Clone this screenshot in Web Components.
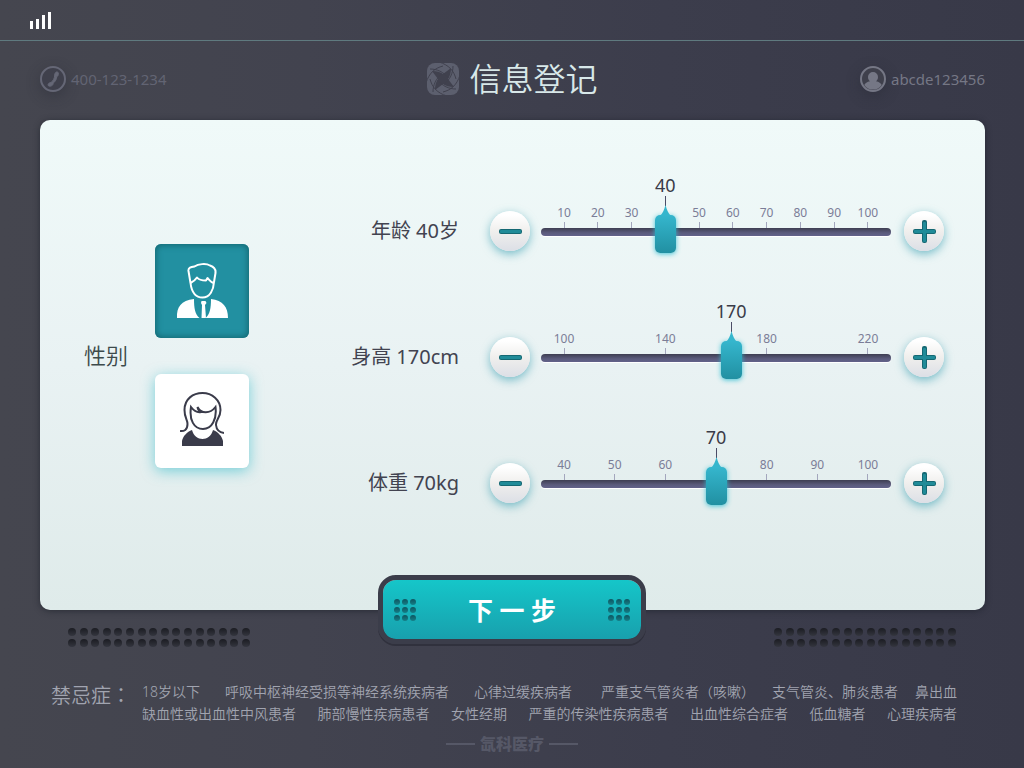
<!DOCTYPE html>
<html lang="zh-CN">
<head>
<meta charset="utf-8">
<meta name="viewport" content="width=device-width, initial-scale=1">
<title>信息登记</title>
<style>
  html { height: 100%; }
  body {
    margin: 0;
    min-height: 100%;
    font-family: "Noto Sans", "Noto Sans CJK SC", sans-serif;
    background: linear-gradient(90deg, #45464f 0%, #42434f 30%, #3c3d4c 65%, #383948 100%);
  }
</style>
</head>
<body>
<register-page></register-page>

<script>
const define = (name, html, setup) => {
  const tpl = document.createElement('template');
  tpl.innerHTML = html;
  customElements.define(name, class extends HTMLElement {
    constructor() {
      super();
      this.attachShadow({ mode: 'open' }).append(tpl.content.cloneNode(true));
    }
    connectedCallback() {
      if (setup && !this.ready) { this.ready = true; setup(this, this.shadowRoot); }
    }
  });
};

define('status-bar', `
  <style>
    :host { display: flex; align-items: center; height: 40px; padding: 0 30px; border-bottom: 1px solid #5f7a7f; }
    svg { display: block; }
  </style>
  <svg width="21" height="17" fill="#fff" shape-rendering="crispEdges" role="img" aria-label="signal">
    <path d="M0 9h3v8H0zM6 7h3v10H6zM12 3h3v14h-3zM18 0h3v17h-3z"/>
  </svg>
`);

define('contact-badge', `
  <style>
    :host { display: flex; align-items: center; gap: 5px; font-size: 15px; line-height: 26px; color: #626473; }
    .ring { display: flex; border-radius: 50%; box-shadow: 0 4px 14px rgba(40, 42, 54, .45); }
    ::slotted(svg) { display: block; }
  </style>
  <span class="ring"><slot name="icon"></slot></span><slot></slot>
`);

define('page-header', `
  <style>
    :host { display: grid; grid-template-columns: 1fr auto 1fr; align-items: center; height: 76px; padding: 0 39px 3px 40px; }
    h1 { display: flex; align-items: center; gap: 10px; margin: 0; font-size: 32px; line-height: 40px; font-weight: 350; color: #d8e8e9; }
    .user { justify-self: end; color: #757785; }
    svg { display: block; }
  </style>
  <contact-badge>
    <svg slot="icon" width="26" height="26" viewBox="0 0 26 26" aria-hidden="true">
      <circle cx="13" cy="13" r="12" fill="#3f404c" stroke="#656776" stroke-width="2"/>
      <path d="M16 6.200c1.500-.9 2.700.2 2.300 2.200c-.2 1.500-.9 2-1.500 2.200c-.3 2.600-1.400 5-3.700 6.700c.1 1.700-1.200 2.700-3 2.900c-1.600.1-2.400-.8-1.900-2c.5-1.100 1.600-1.600 2.800-1.700c2.200-1.600 3.400-4 3.600-6.600c-.2-1.500.6-3.100 1.400-3.700z" fill="#656776" stroke="#656776"/>
    </svg>
    400-123-1234
  </contact-badge>
  <h1>
    <svg width="32" height="32" viewBox="0 0 32 32" aria-hidden="true">
      <defs>
        <clipPath id="c"><rect width="32" height="32" rx="8"/></clipPath>
        <path id="arc" d="M12-1C22 2 27 8 29 16M3 6C10 6 17 9 21 15"/>
      </defs>
      <g clip-path="url(#c)">
        <rect width="32" height="32" fill="#5c5f6e"/>
        <path d="M5 8Q12 8 16 11Q20 8 24 5Q24 12 21 16Q24 20 27 24Q20 24 16 21Q12 24 8 27Q8 20 11 16Q8 12 5 8z" fill="#40414e"/>
        <g fill="none" stroke="#40414e" stroke-width="1">
          <use href="#arc"/>
          <use href="#arc" transform="rotate(90 16 16)"/>
          <use href="#arc" transform="rotate(180 16 16)"/>
          <use href="#arc" transform="rotate(270 16 16)"/>
        </g>
      </g>
    </svg>
    信息登记
  </h1>
  <contact-badge class="user">
    <svg slot="icon" width="26" height="26" viewBox="0 0 26 26" aria-hidden="true">
      <circle cx="13" cy="13" r="12" fill="#3f404c" stroke="#757785" stroke-width="2"/>
      <path d="M13 6a5 5 0 0 1 5 5c0 2-.8 3.400-2 4.300c3 .7 4.900 1.900 5.700 3.700a10.500 10.500 0 0 1-17.400 0c.8-1.800 2.700-3 5.700-3.700c-1.200-.9-2-2.300-2-4.300a5 5 0 0 1 5-5z" fill="#757785"/>
    </svg>
    abcde123456
  </contact-badge>
`);

define('gender-picker', `
  <style>
    :host { display: block; padding-bottom: 2px; }
    fieldset { display: flex; align-items: center; gap: 27px; margin: 0; padding: 0; border: 0; }
    .title { padding-bottom: 3px; font-size: 22px; line-height: 32px; font-weight: 350; color: #3d4a4b; }
    .options { display: flex; flex-direction: column; gap: 36px; }
    label { position: relative; display: grid; place-items: center; width: 94px; height: 94px; border-radius: 6px;
      background: #fff; color: #3a3b4a; box-shadow: 0 3px 14px rgba(45, 185, 200, .6); cursor: pointer; }
    label:has(input:checked) { background: #2290a1; color: #fff; box-shadow: inset 0 0 6px 1px #14656f; }
    input { position: absolute; inset: 0; width: 100%; height: 100%; margin: 0; opacity: 0; }
    svg { display: block; }
  </style>
  <fieldset aria-labelledby="t">
    <span class="title" id="t">性别</span>
    <div class="options">
      <label>
        <input type="radio" name="gender" value="male" aria-label="男" checked>
        <svg width="52" height="56" viewBox="0 0 52 56" aria-hidden="true">
          <path d="M12.500 8C12 4.500 15 4 18.500 3.500C22 1 30 0 34 2.500C38 4 40 6 39.500 10L38 19C37.500 27 34 34.500 26.500 34.500C19 34.500 15.500 28 14.500 20z" fill="none" stroke="currentColor" stroke-width="2" stroke-linejoin="round"/>
          <path d="M14.500 20C17.500 18.500 20 16 21 14.500C23 17 25 17.500 30 17.500L31.500 15C33.500 17 35 19.500 37.500 20" fill="none" stroke="currentColor" stroke-width="2" stroke-linejoin="round"/>
          <path d="M1 55C.5 44 5 37.500 18 36C18 45 19 51.500 23.500 55zM52 55C52 44 47 37.500 35 36C35 45 34 51.500 29.500 55zM25.500 38h4l1 2l-1.500 2l1 13h-4.500l.5-13l-1-2z" fill="currentColor"/>
        </svg>
      </label>
      <label>
        <input type="radio" name="gender" value="female" aria-label="女">
        <svg width="44" height="62" viewBox="0 0 44 62" aria-hidden="true">
          <path d="M0 41C4 41.500 7.500 40 7.500 34C7.500 29 4.500 28 4.500 20C4.500 9 13 3 22.500 3C32 3 40.500 10 40.500 20C40.500 28 35.500 30 36 35C36.500 40 40 42.500 44 43M11 17C9 30 14 39 23 39C32 39 37 29 35.500 17C30 24 21 24 17.500 17C18 20 19 21 21 22C16 23 12.500 19 11 17z" fill="none" stroke="currentColor" stroke-width="2"/>
          <path d="M2 56V51C3 46 7 42 12 40C15 52 30 52 33 40C38 42 42 46 43 51V56z" fill="currentColor"/>
        </svg>
      </label>
    </div>
  </fieldset>
`);

define('round-button', `
  <style>
    :host { display: block; }
    button { display: grid; place-items: center; width: 40px; height: 40px; padding: 0; border: 0; border-radius: 50%;
      background: linear-gradient(#fff 10%, #f0efed 50%, #dcdfe6); box-shadow: 0 3px 10px rgba(40, 150, 170, .6); cursor: pointer; }
    svg { display: block; }
    .v { display: none; }
    :host([kind="plus"]) .v { display: inline; }
  </style>
  <button type="button">
    <svg width="24" height="24" viewBox="0 0 24 24" aria-hidden="true">
      <g fill="#156873"><rect x="1" y="10" width="23" height="5" rx="2"/><rect class="v" x="10" y="1" width="5" height="23" rx="2"/></g>
      <g fill="#208b98"><rect x="2" y="11" width="21" height="3" rx="1"/><rect class="v" x="11" y="3" width="3" height="20" rx="1"/></g>
    </svg>
  </button>
`, (el, root) => root.querySelector('button').setAttribute('aria-label', el.getAttribute('label')));

define('value-slider', `
  <style>
    :host { display: grid; grid-template-columns: minmax(0, 1fr) 40px minmax(0, 350px) 40px; align-items: center; column-gap: 11px; }
    .name { margin-right: 20px; text-align: right; white-space: nowrap; font-size: 20px; line-height: 30px; color: #424350; }
    .scale { position: relative; height: 40px; }
    round-button:last-child { margin-left: 2px; }
    .marks { position: absolute; left: 23px; right: 23px; top: -7px; display: flex; justify-content: space-between; font-size: 12px; line-height: 18px; color: #7b7d97; }
    .marks span { display: flex; flex-direction: column; align-items: center; width: 0; }
    .marks span::after { content: ""; width: 1px; height: 6px; background: #a3a6bd; }
    .marks .hidden { visibility: hidden; }
    .bar { position: absolute; left: 0; right: 0; top: 17px; height: 8px; border-radius: 4px; background: linear-gradient(#3e3e52, #5b5b7c 60%, #62628a); box-shadow: 0 1px 0 #fff; }
    input { position: absolute; left: 12px; top: 4px; width: calc(100% - 24px); height: 38px; margin: 0; appearance: none; background: none; }
    input::-webkit-slider-thumb { appearance: none; width: 21px; height: 38px; border: 0; border-radius: 5px;
      background: linear-gradient(#35b6cd, #2190a2); box-shadow: 0 1px 5px rgba(45, 190, 210, .9); cursor: pointer; }
    .track { position: absolute; left: 23px; right: 23px; top: 0; }
    output { position: absolute; left: var(--at); bottom: -5px; display: flex; flex-direction: column; align-items: center; width: 0;
      font-size: 18px; line-height: 22px; color: #3a3b48; pointer-events: none; }
    output svg { display: block; flex: none; }
  </style>
  <label class="name" for="r"></label>
  <round-button kind="minus" label="减少"></round-button>
  <div class="scale">
    <div class="marks" aria-hidden="true"></div>
    <div class="bar"></div>
    <input id="r" type="range">
    <div class="track">
      <output for="r"><span></span>
        <svg width="11" height="20" viewBox="0 0 11 20" aria-hidden="true"><path d="M5 0h1v10H5z" fill="#4b4c66"/><path d="M5.500 9C7 14 8 17 11 20H0C3 17 4 14 5.500 9z" fill="#35b6cd"/></svg>
      </output>
    </div>
  </div>
  <round-button kind="plus" label="增加"></round-button>
`, (el, root) => {
  const attr = n => el.getAttribute(n);
  const input = root.querySelector('input');
  const out = root.querySelector('output');
  const text = root.querySelector('output span');
  const name = root.querySelector('.name');
  input.min = attr('min'); input.max = attr('max'); input.value = attr('value');
  for (const m of attr('marks').split(' ')) {
    const s = document.createElement('span');
    s.textContent = m.replace('*', '');
    if (m.endsWith('*')) s.className = 'hidden';
    root.querySelector('.marks').append(s);
  }
  const show = shown => {
    out.style.setProperty('--at', (input.value - input.min) / (input.max - input.min) * 100 + '%');
    text.textContent = shown;
    name.textContent = attr('name') + ' ' + shown + attr('unit');
  };
  show(attr('shown') || input.value);
  input.addEventListener('input', () => show(input.value));
  root.querySelectorAll('round-button').forEach(b => b.addEventListener('click', () => {
    input.value = +input.value + (b.getAttribute('kind') === 'plus' ? 1 : -1);
    show(input.value);
  }));
});

define('form-panel', `
  <style>
    :host { display: grid; grid-template-columns: auto minmax(0, 1fr); align-items: center; margin: 0 39px 0 40px; padding: 48px 43px 64px 44px;
      border-radius: 10px; background: linear-gradient(#f0faf9, #e9f2f3 50%, #dfebea); box-shadow: 0 1px 6px rgba(25, 30, 38, .6); }
    .sliders { display: grid; grid-auto-rows: 1fr; min-height: 378px; }
  </style>
  <gender-picker></gender-picker>
  <div class="sliders">
    <value-slider name="年龄" unit="岁" min="10" max="100" value="40" marks="10 20 30 40* 50 60 70 80 90 100"></value-slider>
    <value-slider name="身高" unit="cm" min="100" max="220" value="166" shown="170" marks="100 140 180 220"></value-slider>
    <value-slider name="体重" unit="kg" min="40" max="100" value="70" marks="40 50 60 70* 80 90 100"></value-slider>
  </div>
`);

define('dot-grid', `
  <style>
    :host { display: grid; grid-template-columns: repeat(16, 8px); justify-content: space-between; row-gap: 3px; width: 182px; }
    :host([small]) { grid-template-columns: repeat(3, 6px); width: 22px; row-gap: 2px; }
    i { height: 8px; border-radius: 50%; background: linear-gradient(#1b1c22, #34363f); }
    :host([small]) i { height: 6px; background: linear-gradient(#0e5560, #148088); }
  </style>
`, (el, root) => {
  const n = el.hasAttribute('small') ? 9 : 32;
  for (let k = 0; k < n; k++) root.append(document.createElement('i'));
});

define('next-bar', `
  <style>
    :host { position: relative; display: flex; justify-content: space-between; align-items: flex-end; margin-top: -35px; padding: 0 68px; }
    dot-grid.side { margin-bottom: -3px; }
    button { display: flex; align-items: center; justify-content: space-between; box-sizing: content-box; width: 236px; height: 59px; padding: 0 11px;
      border: 5px solid #3b3d4a; border-radius: 18px; background: linear-gradient(#15c6c9, #18a0ad) padding-box;
      box-shadow: 0 2px 0 #30313d; font: 700 25px/36px "Noto Sans", "Noto Sans CJK SC", sans-serif; color: #fff; cursor: pointer; }
  </style>
  <dot-grid class="side"></dot-grid>
  <button type="button"><dot-grid small></dot-grid><span>下 一 步</span><dot-grid small></dot-grid></button>
  <dot-grid class="side"></dot-grid>
`);

define('contra-list', `
  <style>
    :host { display: flex; align-items: flex-start; margin: 37px 67px 0 51px; color: #a1a4b0; font-weight: 350; }
    h2 { flex: none; width: 91px; margin: 0; font-size: 20px; line-height: 28px; font-weight: 350; white-space: nowrap; }
    .colon { font-family: "Noto Sans CJK TC", sans-serif; }
    ul { display: flex; margin: 0; padding: 0; list-style: none; font-size: 14px; line-height: 22px; white-space: nowrap; }
    .first li + li { margin-left: 25px; }
    .first li.near { margin-left: 17px; }
    .first li.far { margin-left: 29px; }
    .lists { flex: 1; min-width: 0; }
    .second { justify-content: space-between; }
  </style>
  <h2>禁忌症<span class="colon" lang="zh-TW">：</span></h2>
  <div class="lists">
    <ul class="first"><li>18岁以下</li><li>呼吸中枢神经受损等神经系统疾病者</li><li>心律过缓疾病者</li><li class="far">严重支气管炎者（咳嗽）</li><li class="near">支气管炎、肺炎患者</li><li class="near">鼻出血</li></ul>
    <ul class="second"><li>缺血性或出血性中风患者</li><li>肺部慢性疾病患者</li><li>女性经期</li><li>严重的传染性疾病患者</li><li>出血性综合症者</li><li>低血糖者</li><li>心理疾病者</li></ul>
  </div>
`);

define('brand-footer', `
  <style>
    :host { display: flex; justify-content: center; align-items: center; gap: 5px; margin-top: 8px; padding-bottom: 12px;
      font-size: 16px; line-height: 22px; font-weight: 900; color: #565867; }
    :host::before, :host::after { content: ""; width: 29px; height: 2px; background: #565867; }
  </style>
  <slot></slot>
`);

define('register-page', `
  <style>:host { display: block; }</style>
  <status-bar></status-bar>
  <page-header></page-header>
  <form-panel></form-panel>
  <next-bar></next-bar>
  <contra-list></contra-list>
  <brand-footer>氙科医疗</brand-footer>
`);
</script>
</body>
</html>
